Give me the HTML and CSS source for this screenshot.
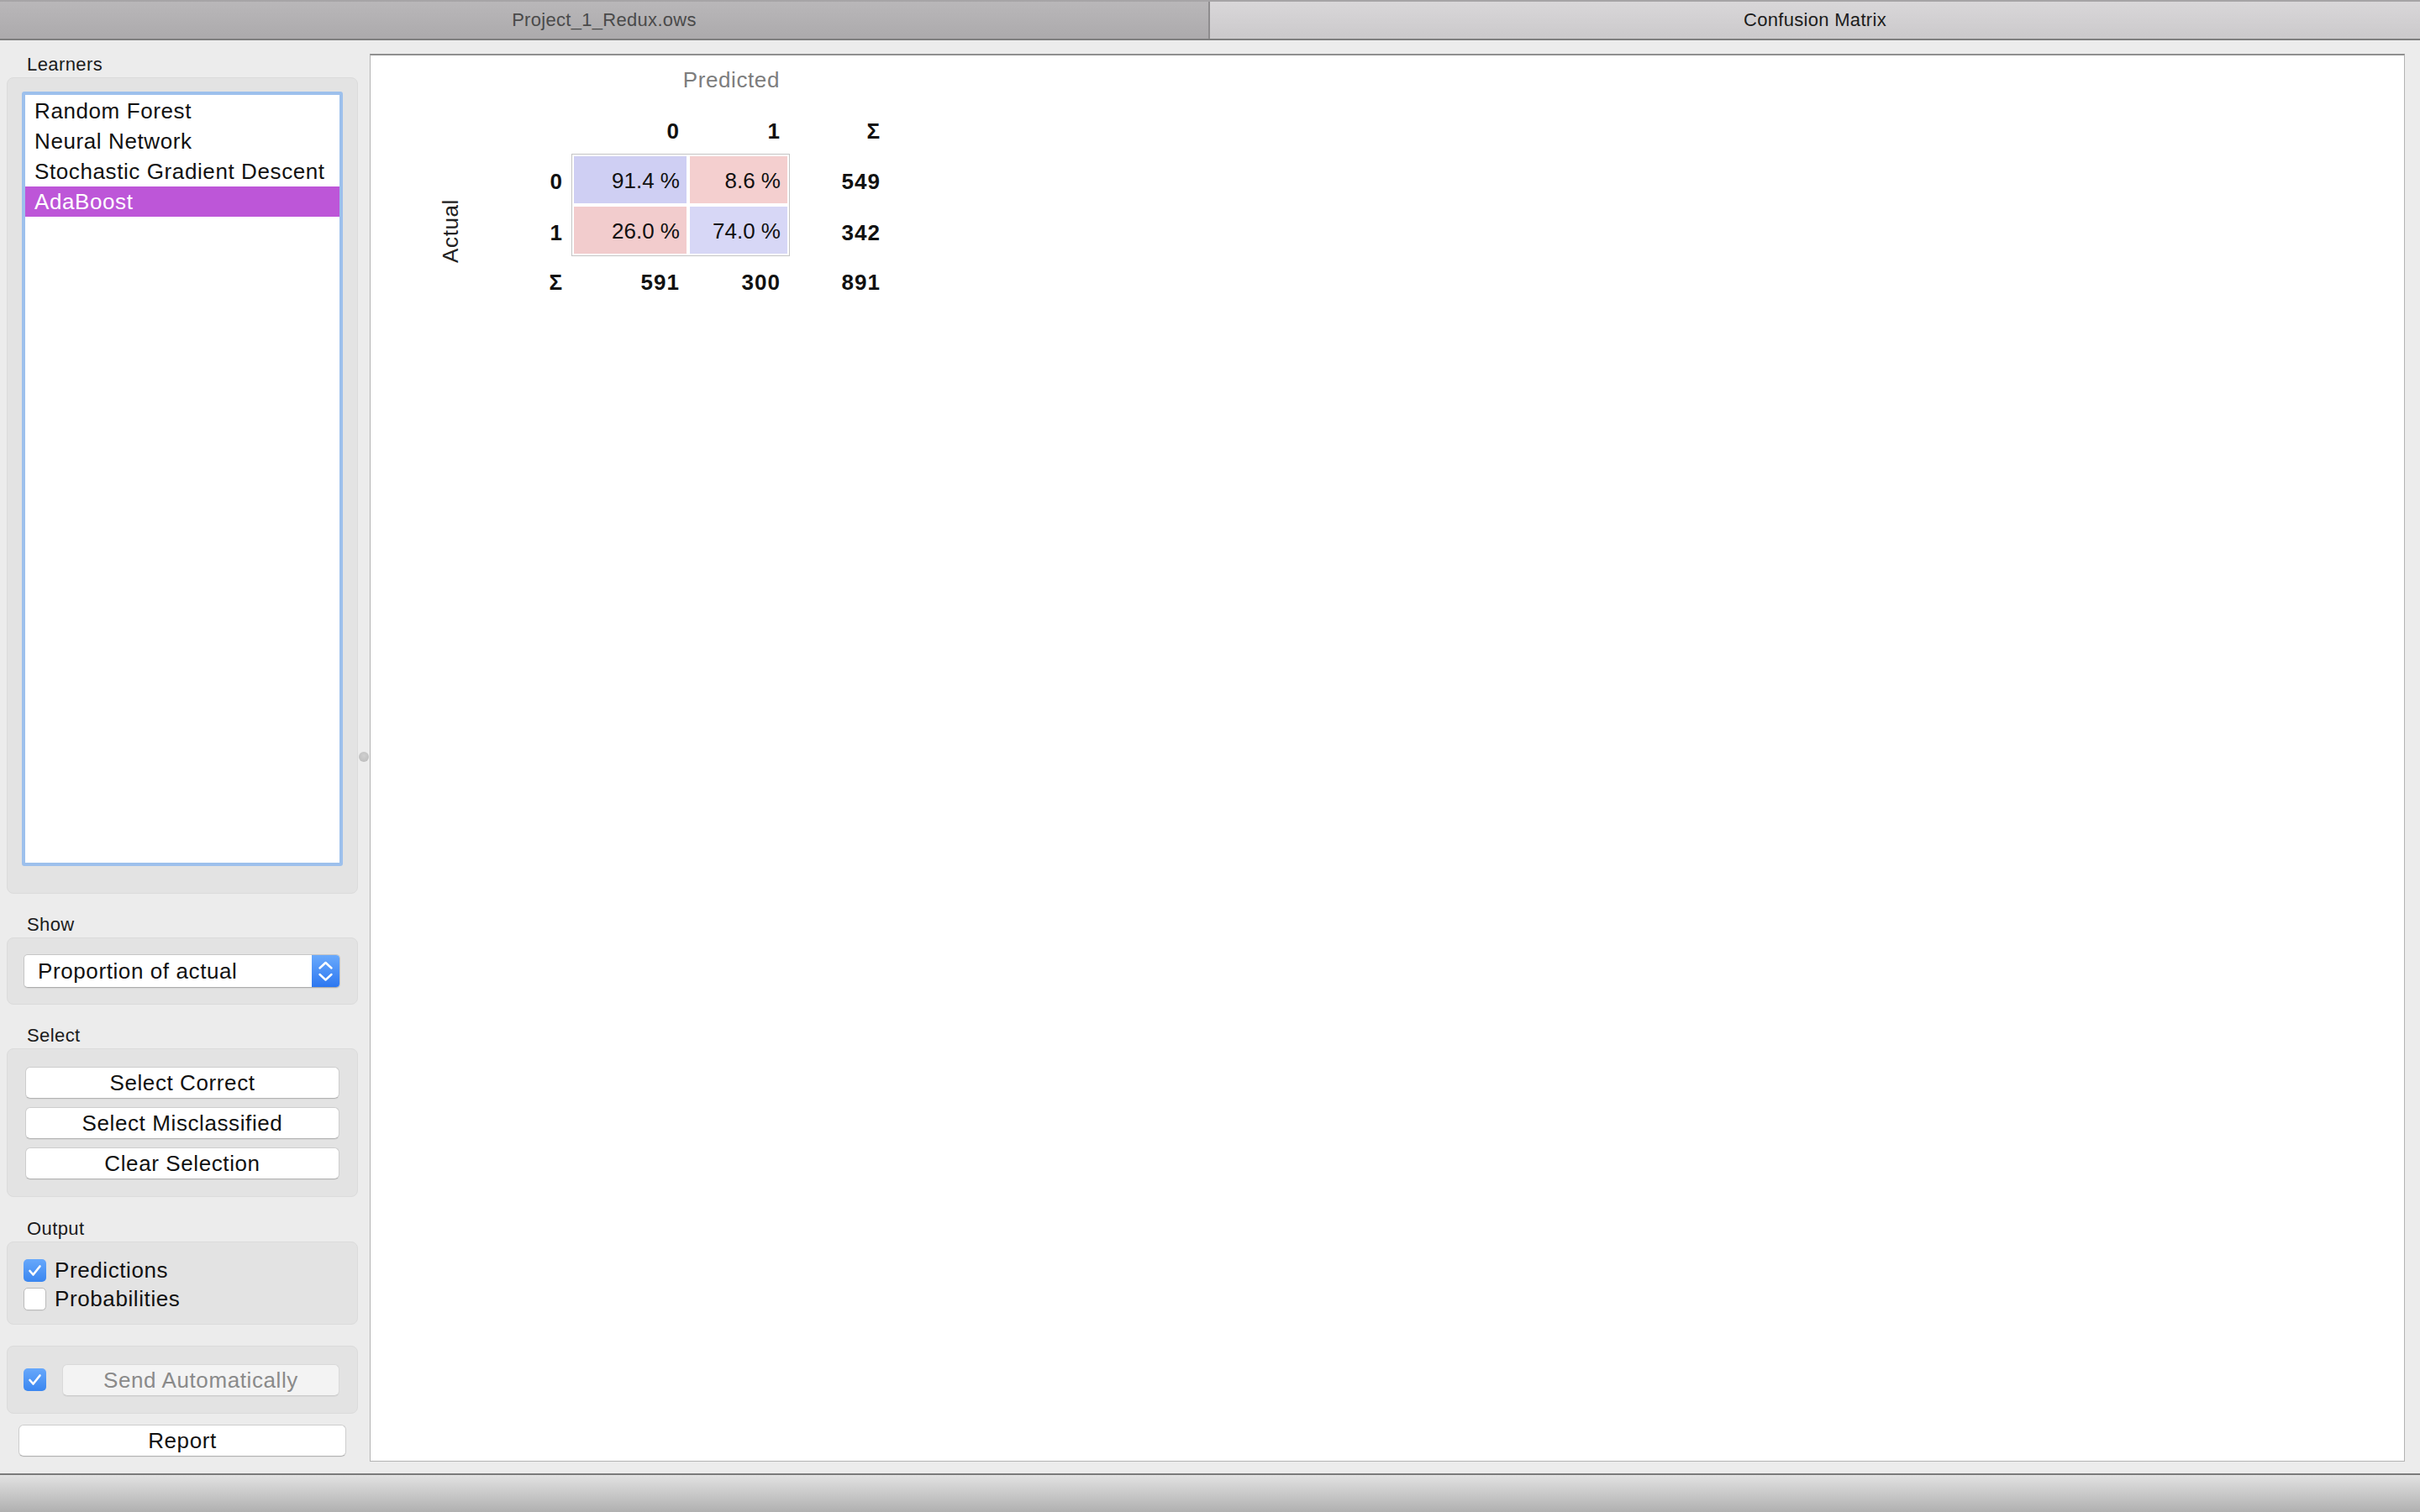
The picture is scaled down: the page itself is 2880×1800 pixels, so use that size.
FILE: index.html
```html
<!DOCTYPE html>
<html lang="en">
<head>
<meta charset="utf-8">
<title>Confusion Matrix</title>
<link rel="stylesheet" href="styles.css">
</head>
<body>
<div class="window">
  <div class="tabbar">
    <div class="tab inactive">Project_1_Redux.ows</div>
    <div class="tab active">Confusion Matrix</div>
  </div>

  <div class="main">
    <aside class="controls">
      <div class="label">Learners</div>
      <div class="group g-learners">
        <div class="listbox">
          <div class="item">Random Forest</div>
          <div class="item">Neural Network</div>
          <div class="item">Stochastic Gradient Descent</div>
          <div class="item selected">AdaBoost</div>
        </div>
      </div>

      <div class="label gap22">Show</div>
      <div class="group g-show">
        <div class="combo">
          <span class="combo-text">Proportion of actual</span>
          <span class="combo-arrows">
            <svg width="33" height="38" viewBox="0 0 33 38"><path d="M9.5 15.5 L16.5 9 L23.5 15.5" fill="none" stroke="#fff" stroke-width="2.4" stroke-linecap="round" stroke-linejoin="round"/><path d="M9.5 23 L16.5 29.5 L23.5 23" fill="none" stroke="#fff" stroke-width="2.4" stroke-linecap="round" stroke-linejoin="round"/></svg>
          </span>
        </div>
      </div>

      <div class="label gap22">Select</div>
      <div class="group g-select">
        <div class="btn">Select Correct</div>
        <div class="btn">Select Misclassified</div>
        <div class="btn">Clear Selection</div>
      </div>

      <div class="label gap23">Output</div>
      <div class="group g-output">
        <div class="check-row">
          <span class="checkbox on"><svg width="27" height="27" viewBox="0 0 27 27"><path d="M7.5 14 L11.5 18.5 L19.5 8.5" fill="none" stroke="#fff" stroke-width="2.6" stroke-linecap="round" stroke-linejoin="round"/></svg></span>
          <span>Predictions</span>
        </div>
        <div class="check-row">
          <span class="checkbox off"></span>
          <span>Probabilities</span>
        </div>
      </div>

      <div class="group g-auto">
        <span class="checkbox on"><svg width="27" height="27" viewBox="0 0 27 27"><path d="M7.5 14 L11.5 18.5 L19.5 8.5" fill="none" stroke="#fff" stroke-width="2.6" stroke-linecap="round" stroke-linejoin="round"/></svg></span>
        <div class="btn disabled">Send Automatically</div>
      </div>

      <div class="btn report">Report</div>
    </aside>

    <div class="splitter"><span class="handle"></span></div>

    <section class="canvas">
      <div class="matrix">
        <div class="m-pred">Predicted</div>
        <div class="m-colhead c0 b">0</div>
        <div class="m-colhead c1 b">1</div>
        <div class="m-colhead cs b">Σ</div>

        <div class="m-actual"><span>Actual</span></div>

        <div class="m-rowhead r0 b">0</div>
        <div class="m-rowhead r1 b">1</div>
        <div class="m-rowhead rs b">Σ</div>

        <div class="m-box">
          <div class="cell blue1">91.4 %</div>
          <div class="cell red1">8.6 %</div>
          <div class="cell red2">26.0 %</div>
          <div class="cell blue2">74.0 %</div>
        </div>

        <div class="m-sum r0 b">549</div>
        <div class="m-sum r1 b">342</div>
        <div class="m-total t0 b">591</div>
        <div class="m-total t1 b">300</div>
        <div class="m-total ts b">891</div>
      </div>
    </section>
  </div>

  <div class="statusbar"></div>
</div>
</body>
</html>
```

FILE: styles.css
```css
* { box-sizing: border-box; }

html, body {
  margin: 0;
  padding: 0;
}

body {
  width: 2880px;
  height: 1800px;
  overflow: hidden;
  background: #ececec;
  font-family: "Liberation Sans", Arial, sans-serif;
  color: #111;
}

.window {
  display: flex;
  flex-direction: column;
  height: 1800px;
}

/* ---------- tab bar ---------- */
.tabbar {
  flex: none;
  display: flex;
  height: 48px;
  border-top: 2px solid #a6a4a6;
  border-bottom: 2px solid #7e7e7e;
}

.tab {
  height: 44px;
  line-height: 44px;
  font-size: 22px;
  letter-spacing: 0.3px;
  text-align: center;
}

.tab.inactive {
  width: 1440px;
  border-right: 2px solid #8e8c8e;
  background: linear-gradient(#b9b7b9, #acaaac);
  color: #4a4a4a;
}

.tab.active {
  flex: 1;
  background: linear-gradient(#d9d7d9, #cbc9cb);
  color: #1c1c1c;
}

/* ---------- main ---------- */
.main {
  flex: 1;
  display: flex;
  min-height: 0;
}

.controls {
  flex: none;
  width: 426px;
  padding: 14px 0 0 8px;
  display: flex;
  flex-direction: column;
}

.label {
  height: 30px;
  line-height: 30px;
  padding-left: 24px;
  font-size: 22px;
  letter-spacing: 0.4px;
  color: #1b1b1b;
}

.gap22 { margin-top: 22px; }
.gap23 { margin-top: 23px; }

.group {
  background: #e3e3e3;
  border: 1px solid #dbdbdb;
  border-radius: 8px;
}

.g-learners {
  height: 972px;
  padding: 16px 17px 0;
}

.listbox {
  height: 922px;
  background: #fff;
  border: 4px solid #9dc0ec;
  border-radius: 3px;
  padding-top: 1px;
}

.item {
  height: 36px;
  line-height: 36px;
  padding-left: 11px;
  font-size: 26px;
  letter-spacing: 0.6px;
  color: #111;
}

.item.selected {
  background: #bd56d8;
  color: #fff;
}

.g-show {
  height: 80px;
  padding: 19px 20px 0 19px;
}

.combo {
  height: 40px;
  display: flex;
  background: #fff;
  border: 1px solid #c6c6c6;
  border-bottom-color: #adadad;
  border-radius: 5px;
  overflow: hidden;
  box-shadow: 0 1px 1px rgba(0, 0, 0, 0.06);
}

.combo-text {
  flex: 1;
  padding-left: 16px;
  line-height: 38px;
  font-size: 26px;
  letter-spacing: 0.6px;
}

.combo-arrows {
  width: 33px;
  display: flex;
  align-items: center;
  justify-content: center;
  background: linear-gradient(#6aaafc, #2d77f0);
}

.g-select {
  height: 177px;
  padding: 21px 21px 0;
  display: flex;
  flex-direction: column;
  gap: 10px;
}

.btn {
  height: 38px;
  line-height: 36px;
  background: #fff;
  border: 1px solid #cdcdcd;
  border-bottom-color: #b3b3b3;
  border-radius: 6px;
  text-align: center;
  font-size: 26px;
  letter-spacing: 0.6px;
  color: #111;
  box-shadow: 0 1px 0 rgba(0, 0, 0, 0.04);
}

.g-output {
  height: 99px;
  padding: 16px 0 0 19px;
}

.check-row {
  display: flex;
  align-items: center;
  gap: 10px;
  height: 34px;
  line-height: 34px;
  font-size: 26px;
  letter-spacing: 0.6px;
}

.checkbox {
  flex: none;
  width: 27px;
  height: 27px;
  border-radius: 5px;
}

.checkbox.on {
  display: flex;
  background: linear-gradient(#67a8fb, #3a86f0);
}

.checkbox.off {
  background: #fff;
  border: 1px solid #bcbcbc;
  box-shadow: 0 1px 1px rgba(0, 0, 0, 0.05);
}

.g-auto {
  height: 81px;
  margin-top: 25px;
  padding: 0 21px 0 19px;
  display: flex;
  align-items: center;
  gap: 19px;
}

.btn.disabled {
  flex: 1;
  background: #f3f3f3;
  border-color: #d9d9d9;
  border-bottom-color: #cccccc;
  color: #8a8a8a;
}

.report {
  margin: 13px 14px 0;
}

/* ---------- splitter ---------- */
.splitter {
  flex: none;
  width: 14px;
  display: flex;
  align-items: center;
  justify-content: center;
}

.handle {
  width: 12px;
  height: 12px;
  border-radius: 50%;
  background: radial-gradient(circle at 50% 40%, #d0d0d0, #b9b9b9);
}

/* ---------- canvas ---------- */
.canvas {
  flex: 1;
  margin: 16px 18px 14px 0;
  background: #fff;
  border: 1px solid #b3b3b3;
  border-top: 2px solid #8f8f8f;
  padding: 9px 0 0 59px;
}

.matrix {
  display: grid;
  grid-template-columns: 72px 108px 139px 121px 110px;
  grid-template-rows: 40px 68px 61px 61px 62px;
  font-size: 26px;
  color: #111;
}

.b {
  font-weight: bold;
  letter-spacing: 1px;
}

.m-pred {
  grid-column: 3 / 5;
  grid-row: 1;
  text-align: right;
  padding-right: 12px;
  line-height: 40px;
  color: #7d7d7d;
  letter-spacing: 0.6px;
}

.m-colhead {
  grid-row: 2;
  line-height: 40px;
  padding-top: 21px;
  text-align: right;
}
.m-colhead.c0 { grid-column: 3; padding-right: 10px; }
.m-colhead.c1 { grid-column: 4; padding-right: 11px; }
.m-colhead.cs { grid-column: 5; padding-right: 2px; }

.m-actual {
  grid-column: 1;
  grid-row: 3 / 6;
  display: flex;
  align-items: center;
  justify-content: center;
}

.m-actual span {
  writing-mode: vertical-rl;
  transform: rotate(180deg);
  color: #222;
  letter-spacing: 0.6px;
  line-height: 30px;
}

.m-rowhead {
  grid-column: 2;
  text-align: right;
  padding-right: 10px;
  line-height: 66px;
}
.m-rowhead.r0 { grid-row: 3; }
.m-rowhead.r1 { grid-row: 4; }
.m-rowhead.rs { grid-row: 5; line-height: 62px; }

.m-box {
  grid-column: 3 / 5;
  grid-row: 3 / 5;
  display: grid;
  grid-template-columns: 134px 116px;
  grid-template-rows: 56px 56px;
  gap: 4px;
  padding: 2px;
  border: 1px solid #c4c4c4;
  background: #fff;
}

.cell {
  text-align: right;
  padding-right: 8px;
  line-height: 58px;
}
.cell.blue1 { background: #cfcff3; }
.cell.red1 { background: #f4cfcf; }
.cell.red2 { background: #f2cccd; }
.cell.blue2 { background: #d7d7f6; }

.m-sum {
  grid-column: 5;
  text-align: right;
  padding-right: 2px;
  line-height: 66px;
}
.m-sum.r0 { grid-row: 3; }
.m-sum.r1 { grid-row: 4; }

.m-total {
  grid-row: 5;
  text-align: right;
  line-height: 62px;
}
.m-total.t0 { grid-column: 3; padding-right: 10px; }
.m-total.t1 { grid-column: 4; padding-right: 11px; }
.m-total.ts { grid-column: 5; padding-right: 2px; }

/* ---------- status bar ---------- */
.statusbar {
  flex: none;
  height: 46px;
  border-top: 2px solid #7b7b7b;
  background: linear-gradient(#e2e2e2, #b0b0b0);
}
```
